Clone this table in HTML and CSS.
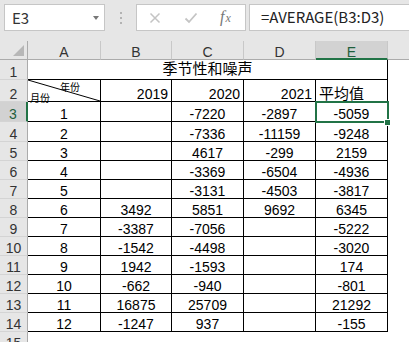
FILE: index.html
```html
<!DOCTYPE html>
<html lang="zh">
<head>
<meta charset="utf-8">
<title>季节性和噪声</title>
<link rel="stylesheet" href="styles.css">
</head>
<body>
<div class="topbar">
  <div class="namebox"><span>E3</span><span class="caret"></span></div>
  <div class="grip"><i></i><i></i><i></i></div>
  <div class="fxbox">
    <svg class="cancel" width="12" height="12" viewBox="0 0 12 12"><path d="M1.5 1.5 L10.5 10.5 M10.5 1.5 L1.5 10.5" stroke="#c4c4c4" stroke-width="1.5" fill="none"/></svg>
    <svg class="enter" width="14" height="12" viewBox="0 0 14 12"><path d="M1.5 6.5 L5 10 L12.5 1.5" stroke="#c4c4c4" stroke-width="1.8" fill="none"/></svg>
    <span class="fx"><span class="fx-f">f</span><span class="fx-x">x</span></span>
  </div>
  <div class="formula">=AVERAGE(B3:D3)</div>
</div>

<div class="sheet">
  <div class="h corner"><span class="tri"></span></div>
  <div class="h">A</div><div class="h">B</div><div class="h">C</div><div class="h">D</div><div class="h sel">E</div><div class="h last"></div>

  <div class="rh">1</div><div class="cell title">季节性和噪声</div><div class="f"></div>

  <div class="rh">2</div>
  <div class="cell diag">
    <svg class="diag-line" viewBox="0 0 100 100" preserveAspectRatio="none"><line x1="0" y1="0" x2="100" y2="100" stroke="#000" stroke-width="1" vector-effect="non-scaling-stroke"/></svg>
    <span class="dl-top">年份</span><span class="dl-bot">月份</span>
  </div>
  <div class="cell r">2019</div><div class="cell r">2020</div><div class="cell r">2021</div><div class="cell l cjk">平均值</div><div class="f"></div>

  <div class="rh sel">3</div><div class="cell c">1</div><div class="cell c"></div><div class="cell c">-7220</div><div class="cell c">-2897</div><div class="cell c active">-5059<span class="selbox"></span><span class="handle"></span></div><div class="f"></div>
  <div class="rh">4</div><div class="cell c">2</div><div class="cell c"></div><div class="cell c">-7336</div><div class="cell c">-11159</div><div class="cell c">-9248</div><div class="f"></div>
  <div class="rh">5</div><div class="cell c">3</div><div class="cell c"></div><div class="cell c">4617</div><div class="cell c">-299</div><div class="cell c">2159</div><div class="f"></div>
  <div class="rh">6</div><div class="cell c">4</div><div class="cell c"></div><div class="cell c">-3369</div><div class="cell c">-6504</div><div class="cell c">-4936</div><div class="f"></div>
  <div class="rh">7</div><div class="cell c">5</div><div class="cell c"></div><div class="cell c">-3131</div><div class="cell c">-4503</div><div class="cell c">-3817</div><div class="f"></div>
  <div class="rh">8</div><div class="cell c">6</div><div class="cell c">3492</div><div class="cell c">5851</div><div class="cell c">9692</div><div class="cell c">6345</div><div class="f"></div>
  <div class="rh">9</div><div class="cell c">7</div><div class="cell c">-3387</div><div class="cell c">-7056</div><div class="cell c"></div><div class="cell c">-5222</div><div class="f"></div>
  <div class="rh">10</div><div class="cell c">8</div><div class="cell c">-1542</div><div class="cell c">-4498</div><div class="cell c"></div><div class="cell c">-3020</div><div class="f"></div>
  <div class="rh">11</div><div class="cell c">9</div><div class="cell c">1942</div><div class="cell c">-1593</div><div class="cell c"></div><div class="cell c">174</div><div class="f"></div>
  <div class="rh">12</div><div class="cell c">10</div><div class="cell c">-662</div><div class="cell c">-940</div><div class="cell c"></div><div class="cell c">-801</div><div class="f"></div>
  <div class="rh">13</div><div class="cell c">11</div><div class="cell c">16875</div><div class="cell c">25709</div><div class="cell c"></div><div class="cell c">21292</div><div class="f"></div>
  <div class="rh">14</div><div class="cell c">12</div><div class="cell c">-1247</div><div class="cell c">937</div><div class="cell c"></div><div class="cell c">-155</div><div class="f"></div>
  <div class="rh">15</div><div class="f wide"></div>
</div>
</body>
</html>
```

FILE: styles.css
```css
* { box-sizing: border-box; margin: 0; padding: 0; }

html, body {
  width: 409px;
  height: 342px;
  overflow: hidden;
  background: #fff;
}

body {
  font-family: "Noto Sans CJK SC", "Noto Sans", sans-serif;
  color: #000;
}

/* ---------- formula bar ---------- */
.topbar {
  height: 41px;
  background: #e6e6e6;
  display: flex;
  align-items: flex-start;
  padding: 4px 0 0 4px;
}

.namebox {
  width: 101px;
  height: 27px;
  background: #fff;
  border: 1px solid #c6c6c6;
  display: flex;
  align-items: center;
  justify-content: space-between;
  padding: 0 5px 0 7px;
  font-size: 15px;
  line-height: 25px;
  color: #333;
}

.caret {
  width: 0;
  height: 0;
  border-left: 3.5px solid transparent;
  border-right: 3.5px solid transparent;
  border-top: 4px solid #777;
}

.grip {
  width: 31px;
  height: 27px;
  display: flex;
  flex-direction: column;
  align-items: center;
  justify-content: center;
  gap: 3px;
}

.grip i {
  display: block;
  width: 2px;
  height: 2px;
  background: #b3b3b3;
}

.fxbox {
  width: 110px;
  height: 27px;
  background: #fff;
  border: 1px solid #c6c6c6;
  display: flex;
  align-items: center;
  padding-left: 12px;
}

.fxbox .enter { margin-left: 23px; }

.fx {
  margin-left: 22px;
  font-family: "Liberation Serif", serif;
  font-style: italic;
  color: #777;
  display: flex;
  align-items: baseline;
  line-height: 20px;
}

.fx-f { font-size: 16px; }
.fx-x { font-size: 12px; margin-left: 1px; }

.formula {
  flex: 1;
  margin-left: 3px;
  margin-right: -10px;
  height: 27px;
  background: #fff;
  border: 1px solid #c6c6c6;
  padding-left: 11px;
  font-size: 15px;
  line-height: 24px;
  color: #222;
}

/* ---------- sheet ---------- */
.sheet {
  display: grid;
  grid-template-columns: 28px 73px 71px 72px 72px 72px 21px;
  grid-template-rows: 19px 20px 22px 20px 20px repeat(10, 19px) 19px;
  font-family: "Liberation Sans", "Noto Sans CJK SC", sans-serif;
}

.h {
  background: #e6e6e6;
  border-right: 1px solid #c8c8c8;
  border-bottom: 1px solid #ababab;
  display: flex;
  align-items: flex-end;
  justify-content: center;
  font-size: 14px;
  line-height: 14px;
  color: #333;
}

.h.sel {
  background: #d2d2d2;
  border-bottom: 2px solid #217346;
  color: #1f5f3c;
  line-height: 12px;
}

.h.last { border-right: none; }

.corner {
  position: relative;
  border-right-color: #ababab;
}

.tri {
  position: absolute;
  right: 3px;
  bottom: 3px;
  width: 0;
  height: 0;
  border-left: 11px solid transparent;
  border-bottom: 11px solid #b7b7b7;
}

.rh {
  background: #e6e6e6;
  border-right: 1px solid #ababab;
  border-bottom: 1px solid #d4d4d4;
  display: flex;
  align-items: flex-end;
  justify-content: center;
  font-size: 14px;
  line-height: 14px;
  color: #333;
}

.rh.sel {
  background: #d2d2d2;
  border-right: 2px solid #217346;
  color: #1f5f3c;
}

.cell {
  border-right: 1px solid #000;
  border-bottom: 1px solid #000;
  display: flex;
  align-items: flex-end;
  font-size: 14px;
  line-height: 14px;
  white-space: nowrap;
}

.cell.c { justify-content: center; }
.cell.r { justify-content: flex-end; padding-right: 3px; }
.cell.l { justify-content: flex-start; padding-left: 3px; }

.cell.cjk {
  font-family: "Noto Sans CJK SC", sans-serif;
  font-size: 15px;
  line-height: 17px;
}

.cell.title {
  grid-column: span 5;
  justify-content: center;
  align-items: center;
  padding-bottom: 4px;
  font-family: "Noto Sans CJK SC", sans-serif;
  font-size: 15px;
  line-height: 15px;
}

.cell.diag {
  position: relative;
  display: flex;
  flex-direction: column;
  align-items: stretch;
  padding-top: 2px;
  font-family: "Noto Sans CJK SC", sans-serif;
  font-size: 10px;
  line-height: 10px;
}

.diag-line {
  position: absolute;
  left: 0;
  top: 0;
  width: 100%;
  height: 100%;
}

.dl-top { padding-left: 32px; }
.dl-bot { padding-left: 2px; margin-top: 1px; }

.cell.active { position: relative; }

.selbox {
  position: absolute;
  left: -1px;
  top: -1px;
  width: 74px;
  height: 22px;
  border: 2px solid #217346;
}

.handle {
  position: absolute;
  left: 69px;
  top: 18px;
  width: 5px;
  height: 5px;
  background: #217346;
  box-shadow: 0 0 0 1px #fff;
}

.f { background: #fff; }
.f.wide { grid-column: span 6; }
```
